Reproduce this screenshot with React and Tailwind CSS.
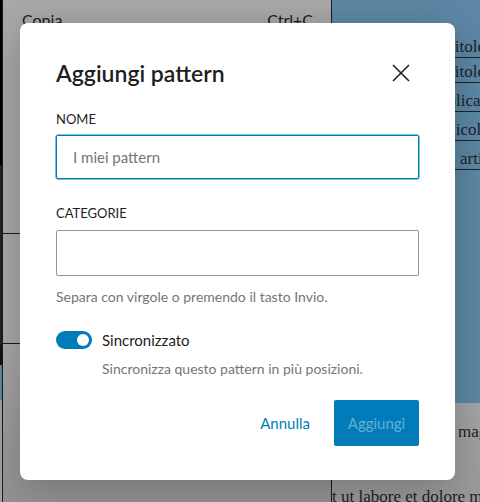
import React, { useState } from 'react';

const font = { fontFamily: 'Lato, "Noto Sans", sans-serif' };
const serif = { fontFamily: '"Liberation Serif", serif' };

function Background() {
  return (
    <div className="flex w-[480px] h-[502px]">
      {/* striscia sinistra */}
      <div className="w-[3px] shrink-0 flex flex-col border-r border-[#1a1a1a]">
        <div className="h-[165px] bg-black" />
        <div className="h-[180px] bg-[#2a2118]" />
        <div className="h-[20px] bg-[#111]" />
        <div className="h-[35px] bg-[#5d88a5]" />
        <div className="flex-1 bg-[#a3a3a3]" />
      </div>

      {/* area centrale */}
      <div className="w-[329px] shrink-0 flex flex-col bg-[#a9a9a9] border-r border-[#1a1a1a]">
        <div className="flex justify-between pl-[19px] pr-[18px] pt-[10px] text-[16px] leading-[20px] text-[#1b1b1b]" style={font}>
          <span>Copia</span>
          <span>Ctrl+C</span>
        </div>
        <div className="h-[203px]" />
        <div className="h-px bg-[#1a1a1a]" />
        <div className="h-[109px]" />
        <div className="h-px bg-[#1a1a1a]" />
        <div className="flex-1 bg-gradient-to-b from-[#a9a9a9] to-[#939393]" />
      </div>

      {/* pannello destro */}
      <div className="flex-1 min-w-0 flex flex-col">
        <div className="h-[403px] bg-[#5d88a5] pt-[36px] pl-[113px] flex flex-col gap-[6px] text-[17px] leading-[21px] text-[#1e2328] whitespace-nowrap overflow-hidden" style={serif}>
          <span className="underline underline-offset-[5px]">Titolo</span>
          <span className="underline underline-offset-[5px] mt-[-2px]">Titolo</span>
          <span className="underline underline-offset-[5px] -ml-[24px] mt-[2px]">Pubblica</span>
          <span className="underline underline-offset-[5px] -ml-[12px] mt-[2px]">Articolo</span>
          <span className="underline underline-offset-[5px] -ml-[10px] mt-[2px]">Un articolo</span>
        </div>
        <div className="flex-1 bg-gradient-to-b from-[#a6a6a6] to-[#999] pt-[18px] text-[17px] leading-[21px] text-[#1e1e1e] whitespace-nowrap overflow-hidden" style={serif}>
          <div className="pl-[126px]">magna</div>
          <div className="pt-[44px]">t ut labore et dolore magna</div>
        </div>
      </div>
    </div>
  );
}

function Toggle({ on, onChange }) {
  return (
    <button
      onClick={() => onChange(!on)}
      className={`w-[36px] h-[18px] rounded-full flex items-center px-[3px] ${on ? 'bg-[#007cba] justify-end' : 'bg-white border border-[#1e1e1e] justify-start'}`}
    >
      <span className={`w-[12px] h-[12px] rounded-full ${on ? 'bg-white' : 'bg-[#1e1e1e]'}`} />
    </button>
  );
}

export default function App() {
  const [nome, setNome] = useState('');
  const [categorie, setCategorie] = useState('');
  const [sync, setSync] = useState(true);

  return (
    <div className="relative w-[480px] h-[502px] overflow-hidden" style={font}>
      <Background />

      <div className="absolute left-[20px] top-[23px] w-[435px] h-[457px] bg-white rounded-[8px] shadow-[0_8px_40px_rgba(0,0,0,0.25)] px-[36px] pt-[32px] flex flex-col text-[#1e1e1e]">
        <div className="flex items-center justify-between h-[36px]">
          <h1 className="text-[23px] font-semibold leading-none">Aggiungi pattern</h1>
          <button className="mr-[9px] text-[#1e1e1e]">
            <svg width="18" height="18" viewBox="0 0 18 18" fill="none" stroke="currentColor" strokeWidth="1.6">
              <path d="M1 1 L17 17 M17 1 L1 17" />
            </svg>
          </button>
        </div>

        <label className="mt-[20px] text-[13px] uppercase leading-[16px] text-[#1e1e1e]">Nome</label>
        <input
          value={nome}
          onChange={(e) => setNome(e.target.value)}
          placeholder="I miei pattern"
          autoFocus
          className="mt-[8px] h-[44px] w-full rounded-[2px] border border-[#007cba] shadow-[0_0_0_0.5px_#007cba] px-[16px] text-[15px] text-[#1e1e1e] placeholder:text-[#757575] outline-none"
        />

        <label className="mt-[26px] text-[13px] uppercase leading-[16px] text-[#1e1e1e]">Categorie</label>
        <input
          value={categorie}
          onChange={(e) => setCategorie(e.target.value)}
          className="mt-[9px] h-[46px] w-full rounded-[2px] border border-[#949494] px-[16px] text-[15px] outline-none"
        />
        <p className="mt-[12px] text-[14px] leading-[18px] text-[#757575]">Separa con virgole o premendo il tasto Invio.</p>

        <div className="mt-[24px] flex items-center gap-[10px]">
          <Toggle on={sync} onChange={setSync} />
          <span className="text-[15px] leading-[20px] text-[#1e1e1e]">Sincronizzato</span>
        </div>
        <p className="mt-[10px] pl-[46px] text-[14px] leading-[18px] text-[#757575]">Sincronizza questo pattern in più posizioni.</p>

        <div className="mt-[22px] flex justify-end items-center gap-[24px]">
          <button className="text-[15px] text-[#007cba]">Annulla</button>
          <button disabled className="w-[85px] h-[46px] rounded-[2px] bg-[#007cba] text-[15px] text-[#66b0d6]">Aggiungi</button>
        </div>
      </div>
    </div>
  );
}
